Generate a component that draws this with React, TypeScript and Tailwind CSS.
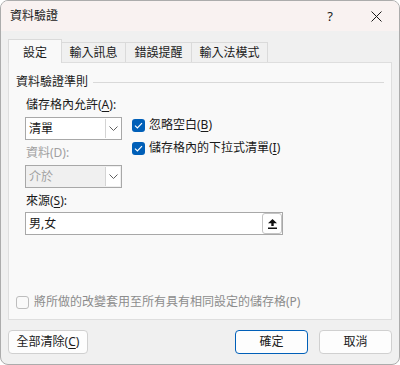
import React from "react";

const font = "font-['Noto_Sans','Noto_Sans_CJK_TC',sans-serif]";

function Chevron() {
  return (
    <svg width="9" height="5" viewBox="0 0 9 5" fill="none">
      <path d="M0.5 0.5 L4.5 4.5 L8.5 0.5" stroke="#606060" strokeWidth="1" />
    </svg>
  );
}

function Check() {
  return (
    <span className="flex h-[13px] w-[13px] items-center justify-center rounded-[3px] bg-[#005fb8]">
      <svg width="9" height="7" viewBox="0 0 9 7" fill="none">
        <path d="M1 3.6 L3.4 6 L8 1.2" stroke="white" strokeWidth="1.2" />
      </svg>
    </span>
  );
}

function Select({ value, disabled }: { value: string; disabled?: boolean }) {
  return (
    <div
      className={`flex h-[23px] w-[97px] items-stretch border border-[#a8a8a8] ${
        disabled ? "bg-[#f0f0f0] text-[#a0a0a0]" : "bg-white text-[#1a1a1a]"
      }`}
    >
      <div className="flex flex-1 items-center pl-[3px] text-[12px] leading-[16px]">{value}</div>
      <div className="m-px flex w-[15px] items-center justify-center border-l border-[#d4d4d4] bg-white">
        <Chevron />
      </div>
    </div>
  );
}

export default function App() {
  const tabs = [
    { label: "輸入訊息", w: "w-[64px]" },
    { label: "錯誤提醒", w: "w-[66px]" },
    { label: "輸入法模式", w: "w-[76px]" },
  ];

  return (
    <div
      className={`${font} flex h-[365px] w-[400px] flex-col overflow-hidden rounded-[8px] border border-[#acacac] bg-[#f0f0f0] text-[12px] leading-[16px] text-[#1a1a1a]`}
    >
      {/* title bar */}
      <div className="flex h-[30px] items-center bg-[#f9f2f1] pl-[9px]">
        <span className="text-[12px]">資料驗證</span>
        <div className="flex-1" />
        <div className="flex w-[46px] items-center justify-center text-[13px]">?</div>
        <div className="flex w-[46px] items-center justify-center">
          <svg width="11" height="11" viewBox="0 0 11 11">
            <path d="M0.5 0.5 L10.5 10.5 M10.5 0.5 L0.5 10.5" stroke="#1a1a1a" strokeWidth="1" />
          </svg>
        </div>
      </div>

      <div className="flex flex-1 flex-col pl-[7px] pr-[7px]">
        {/* tabs */}
        <div className="mt-[8px] flex h-[23px] items-end">
          <div className="relative z-10 -mb-px flex h-[24px] w-[54px] items-center justify-center border border-b-0 border-[#dadada] bg-[#f9f9f9] pt-[2px]">
            設定
          </div>
          {tabs.map((t) => (
            <div
              key={t.label}
              className={`flex h-[20px] ${t.w} items-center justify-center border-r border-t border-[#dadada] bg-[#f0f0f0] pt-px`}
            >
              {t.label}
            </div>
          ))}
        </div>

        {/* panel */}
        <div className="flex h-[258px] flex-col border border-[#dedede] bg-[#f9f9f9]">
          <div className="mt-[11px] flex items-center pl-[7px] pr-[7px]">
            <span>資料驗證準則</span>
            <div className="ml-[5px] h-px flex-1 bg-[#d9d9d9]" />
          </div>

          <div className="flex flex-col pl-[16px]">
            <div className="mt-[7px] pl-px">
              儲存格內允許(<u className="underline-offset-2">A</u>):
            </div>
            <div className="mt-[4px] flex">
              <div className="flex flex-col">
                <Select value="清單" />
                <div className="mt-[5px] pl-px text-[#a0a0a0]">資料(D):</div>
                <div className="mt-[4px]">
                  <Select value="介於" disabled />
                </div>
              </div>
              <div className="ml-[10px] flex flex-col">
                <div className="flex h-[16px] items-center gap-[4px]">
                  <Check />
                  <span>
                    忽略空白(<u className="underline-offset-2">B</u>)
                  </span>
                </div>
                <div className="mt-[7px] flex h-[16px] items-center gap-[4px]">
                  <Check />
                  <span>
                    儲存格內的下拉式清單(<u className="underline-offset-2">I</u>)
                  </span>
                </div>
              </div>
            </div>
            <div className="mt-[5px] pl-px">
              來源(<u className="underline-offset-2">S</u>):
            </div>
            <div className="mt-[3px] flex h-[23px] w-[258px] items-stretch border border-[#a8a8a8] bg-white">
              <div className="flex flex-1 items-center pl-[3px]">男,女</div>
              <div className="flex w-[20px] items-center justify-center rounded-[3px] border border-[#c4c4c4] bg-white">
                <svg width="9" height="10" viewBox="0 0 9 10">
                  <path d="M4.5 0 L0 4.2 H3.3 V7 H5.7 V4.2 H9 Z" fill="#111" />
                  <rect x="0" y="8.5" width="9" height="1.5" fill="#111" />
                </svg>
              </div>
            </div>
          </div>

          <div className="mb-[9px] mt-auto flex h-[16px] items-center gap-[5px] pl-[7px] text-[#8c8c8c]">
            <span className="h-[13px] w-[13px] rounded-[3px] border border-[#bdbdbd]" />
            <span>將所做的改變套用至所有具有相同設定的儲存格(P)</span>
          </div>
        </div>

        {/* buttons */}
        <div className="mt-[10px] flex">
          <button className="flex h-[24px] w-[80px] items-center justify-center rounded-[4px] border border-[#d0d0d0] bg-[#fdfdfd]">
            全部清除(<u className="underline-offset-2">C</u>)
          </button>
          <div className="flex-1" />
          <button className="flex h-[24px] w-[73px] items-center justify-center rounded-[4px] border border-[#005fb8] bg-[#fdfdfd]">
            確定
          </button>
          <button className="ml-[11px] flex h-[24px] w-[73px] items-center justify-center rounded-[4px] border border-[#d0d0d0] bg-[#fdfdfd]">
            取消
          </button>
        </div>
      </div>
    </div>
  );
}
